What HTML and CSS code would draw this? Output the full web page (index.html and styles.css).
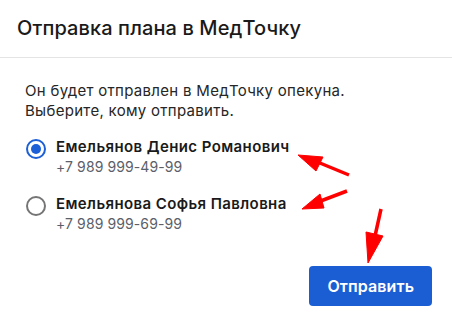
FILE: index.html
```html
<!DOCTYPE html>
<html lang="ru">
<head>
    <meta charset="UTF-8">
    <meta name="viewport" content="width=device-width, initial-scale=1.0">
    <title>Отправка плана в МедТочку</title>
    <link rel="stylesheet" href="styles.css">
</head>
<body>

<div class="modal">
    <div class="modal-header">
        <h2 class="modal-title">Отправка плана в МедТочку</h2>
    </div>

    <div class="modal-body">
        <p class="hint">Он будет отправлен в МедТочку опекуна.<br>Выберите, кому отправить.</p>

        <div class="options">
            <label class="option">
                <input type="radio" name="guardian" checked>
                <span class="radio"></span>
                <span class="person">
                    <span class="name">Емельянов Денис Романович</span>
                    <span class="phone">+7 989 999-49-99</span>
                </span>
            </label>
            <label class="option">
                <input type="radio" name="guardian">
                <span class="radio"></span>
                <span class="person">
                    <span class="name">Емельянова Софья Павловна</span>
                    <span class="phone">+7 989 999-69-99</span>
                </span>
            </label>
        </div>
    </div>

    <div class="modal-footer">
        <button class="btn-send">Отправить</button>
    </div>

    <!-- annotation arrows -->
    <svg class="arrows" width="452" height="326" viewBox="0 0 452 326">
        <g fill="#ff0000" stroke="#ff0000">
            <line x1="349" y1="175" x2="315" y2="161" stroke-width="3.5"/>
            <polygon points="298,155 323,157 316,171" stroke-width="1"/>
            <line x1="347" y1="191" x2="318" y2="202" stroke-width="3.5"/>
            <polygon points="302,209 320,194 324,208" stroke-width="1"/>
            <line x1="381" y1="209" x2="375" y2="236" stroke-width="3.5"/>
            <polygon points="368,263 366,232 383,236" stroke-width="1"/>
        </g>
    </svg>
</div>

</body>
</html>
```

FILE: styles.css
```css
body {
    margin: 0;
    background-color: #ffffff;
    font-family: Inter, "Noto Sans", sans-serif;
    color: #1f1f1f;
}
.modal {
    position: relative;
    width: 452px;
    height: 326px;
    background: #fff;
    overflow: hidden;
}
.modal-header {
    padding: 14px 17px 15px;
    border-bottom: 1px solid #e4e4e4;
}
.modal-title {
    margin: 0;
    font-size: 20px;
    line-height: 28px;
    font-weight: 500;
    letter-spacing: 0.1px;
    color: #1a1a1a;
}
.modal-body {
    padding: 23px 24px 0 25px;
}
.hint {
    margin: 0;
    font-size: 15px;
    line-height: 20px;
    letter-spacing: 0.3px;
    color: #262626;
}
.options {
    display: flex;
    flex-direction: column;
    gap: 17px;
    margin-top: 16px;
    margin-left: 1px;
}
.option {
    display: flex;
    align-items: flex-start;
    gap: 10px;
    cursor: pointer;
}
.option input {
    display: none;
}
.radio {
    box-sizing: border-box;
    width: 20px;
    height: 20px;
    margin-top: 2px;
    border: 2px solid #757575;
    border-radius: 50%;
    flex-shrink: 0;
    position: relative;
}
.option input:checked + .radio {
    border-color: #1c5fd6;
}
.option input:checked + .radio::after {
    content: "";
    position: absolute;
    top: 3px;
    left: 3px;
    width: 10px;
    height: 10px;
    border-radius: 50%;
    background: #1c5fd6;
}
.person {
    display: flex;
    flex-direction: column;
}
.name {
    font-size: 15px;
    line-height: 20px;
    font-weight: 600;
    letter-spacing: 0.4px;
    color: #1a1a1a;
}
.phone {
    font-size: 14px;
    line-height: 20px;
    letter-spacing: 0.1px;
    color: #5b6068;
}
.modal-footer {
    display: flex;
    justify-content: flex-end;
    padding: 32px 20px 0;
}
.btn-send {
    height: 40px;
    padding: 0 18px;
    border: none;
    border-radius: 4px;
    background: #1b5ed3;
    color: #fff;
    font-family: Inter, "Noto Sans", sans-serif;
    font-size: 16px;
    font-weight: 600;
    letter-spacing: 0.1px;
    cursor: pointer;
}
.arrows {
    position: absolute;
    top: 0;
    left: 0;
    pointer-events: none;
}
```
